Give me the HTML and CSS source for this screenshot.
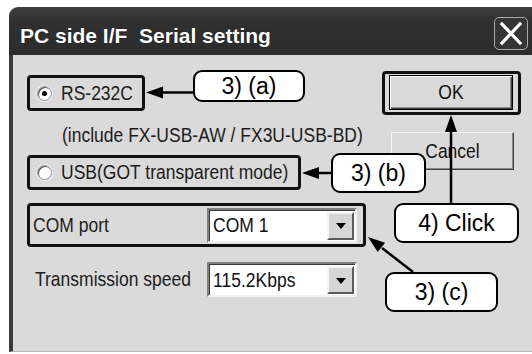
FILE: index.html
```html
<!DOCTYPE html>
<html>
<head>
<meta charset="utf-8">
<link rel="stylesheet" href="styles.css">
</head>
<body>
<div class="window">
  <div class="titlebar">
    <span class="title">PC side I/F&nbsp; Serial setting</span>
    <span class="close">
      <svg width="32" height="31" viewBox="0 0 32 31"><path d="M7 6 L25 25 M25 6 L7 25" stroke="#fff" stroke-width="3.2" stroke-linecap="square" fill="none"/></svg>
    </span>
  </div>
  <div class="client">
    <div class="left">
      <div class="mark rs"><span class="radio on"></span><span class="t">RS-232C</span></div>
      <div class="note"><span class="t">(include FX-USB-AW / FX3U-USB-BD)</span></div>
      <div class="mark usb"><span class="radio"></span><span class="t">USB(GOT transparent mode)</span></div>
      <div class="mark com">
        <span class="lbl"><span class="t">COM port</span></span>
        <div class="combo"><span class="val"><span class="t">COM 1</span></span><span class="drop"><i></i></span></div>
      </div>
      <div class="speed">
        <span class="lbl"><span class="t">Transmission speed</span></span>
        <div class="combo"><span class="val"><span class="t">115.2Kbps</span></span><span class="drop"><i></i></span></div>
      </div>
    </div>
    <div class="right">
      <div class="okframe"><div class="btn ok"><span class="t">OK</span></div></div>
      <div class="btn cancel"><span class="t">Cancel</span></div>
    </div>
  </div>
</div>

<div class="callout ca">3) (a)</div>
<div class="callout cb">3) (b)</div>
<div class="callout c4">4) Click</div>
<div class="callout cc">3) (c)</div>

<svg class="arrows" width="532" height="354" viewBox="0 0 532 354">
  <g stroke="#000" stroke-width="2.5" fill="none">
    <path d="M161 92.5 H194"/>
    <path d="M317 173 H332"/>
    <path d="M451 130 V204"/>
    <path d="M413 272 L382 248"/>
  </g>
  <g fill="#000">
    <polygon points="146,92.5 163,86.5 163,98.5"/>
    <polygon points="302,173 319,167 319,179"/>
    <polygon points="451,115 445,132 457,132"/>
    <polygon points="368,237 385.1,242.7 377.7,252.1"/>
  </g>
</svg>
</body>
</html>
```

FILE: styles.css
```css
html, body {
  margin: 0;
  padding: 0;
}
body {
  width: 532px;
  height: 354px;
  background: #ffffff;
  position: relative;
  overflow: hidden;
  font-family: "Liberation Sans", Arial, sans-serif;
}

.window {
  margin: 7px 0 0 9px;
  width: 523px;
}

.titlebar {
  height: 48px;
  box-sizing: border-box;
  background: linear-gradient(#414141, #303030 30%, #2c2c2c);
  border-top-left-radius: 9px;
  display: flex;
  align-items: flex-start;
  padding-left: 11px;
}
.title {
  margin-top: 17px;
  font-size: 21px;
  line-height: 24px;
  font-weight: bold;
  color: #ffffff;
  text-shadow: 0 0 1px #000;
  white-space: nowrap;
}
.close {
  margin-left: auto;
  margin-right: 4px;
  margin-top: 10px;
  width: 34px;
  height: 33px;
  box-sizing: border-box;
  border: 1.5px solid #a8a8a8;
  border-radius: 5px;
  background: #353535;
  display: flex;
  align-items: center;
  justify-content: center;
}

.client {
  height: 297px;
  box-sizing: border-box;
  background: #dadada;
  border-left: 4px solid #3a3a3a;
  border-bottom: 1px solid #b8b8b8;
  display: flex;
  color: #1c1c1c;
  font-size: 17.5px;
}

.t {
  display: inline-block;
  transform: scaleY(1.17);
  white-space: nowrap;
}

.left {
  width: 369px;
  box-sizing: border-box;
  padding-left: 14px;
  display: flex;
  flex-direction: column;
  align-items: flex-start;
}

.mark {
  border: 3px solid #111;
  border-radius: 4px;
  box-sizing: border-box;
  display: flex;
  align-items: center;
}
.rs {
  margin-top: 20px;
  width: 118px;
  height: 36px;
  padding-left: 7px;
  gap: 9px;
}
.usb {
  margin-top: 10px;
  width: 274px;
  height: 35px;
  padding-left: 7px;
  gap: 9px;
}
.note {
  margin-top: 14px;
  margin-left: 35px;
  line-height: 20px;
  white-space: nowrap;
}

.radio {
  width: 15px;
  height: 15px;
  box-sizing: border-box;
  border-radius: 50%;
  background: #fff;
  border: 1.5px solid #8c8c8c;
  box-shadow: inset 1px 1px 0 #505050, 0 0 0 1px #f2f2f2;
  display: flex;
  align-items: center;
  justify-content: center;
  flex: none;
}
.radio.on::after {
  content: "";
  width: 5px;
  height: 5px;
  border-radius: 50%;
  background: #000;
}

.com {
  margin-top: 13px;
  width: 339px;
  height: 44px;
  padding: 0 6px 0 3px;
}
.com .lbl {
  width: 174px;
  flex: none;
}
.speed {
  margin-top: 15px;
  padding-left: 8px;
  display: flex;
  align-items: center;
}
.speed .lbl {
  width: 172px;
  flex: none;
}

.combo {
  width: 150px;
  height: 35px;
  box-sizing: border-box;
  background: #fff;
  border: 2px solid;
  border-color: #808080 #f2f2f2 #f2f2f2 #808080;
  box-shadow: inset 1px 1px 0 #3a3a3a;
  padding: 2px 1px 1px 2px;
  display: flex;
  align-items: stretch;
  flex: none;
}
.combo .val {
  flex: 1;
  display: flex;
  align-items: center;
  padding-left: 2px;
  color: #111;
}
.drop {
  width: 27px;
  box-sizing: border-box;
  background: #d6d6d6;
  border: 2px solid;
  border-color: #f4f4f4 #5a5a5a #5a5a5a #f4f4f4;
  display: flex;
  align-items: center;
  justify-content: center;
}
.drop i {
  width: 0;
  height: 0;
  border-left: 5px solid transparent;
  border-right: 5px solid transparent;
  border-top: 6px solid #000;
  margin-top: 1px;
}

.right {
  display: flex;
  flex-direction: column;
  align-items: flex-start;
}
.okframe {
  margin-top: 16px;
  border: 3px solid #111;
  border-radius: 4px;
  padding: 1px 5px 2px 4px;
}
.btn {
  box-sizing: border-box;
  background: #dadada;
  display: flex;
  align-items: center;
  justify-content: center;
  color: #111;
}
.ok {
  width: 124px;
  height: 35px;
  border: 1px solid #000;
  box-shadow: inset 1px 1px 0 #ffffff, inset -1px -1px 0 #404040, inset -2px -2px 0 #8a8a8a;
}
.cancel {
  margin-top: 17px;
  margin-left: 9px;
  width: 123px;
  height: 38px;
  border: 1px solid;
  border-color: #f6f6f6 #404040 #404040 #f6f6f6;
  box-shadow: inset -1px -1px 0 #8a8a8a;
}

.callout {
  position: absolute;
  box-sizing: border-box;
  background: #fff;
  border: 2px solid #000;
  border-radius: 9px;
  font-size: 23px;
  color: #000;
  display: flex;
  align-items: center;
  justify-content: center;
  white-space: nowrap;
}
.ca { left: 193px; top: 70px; width: 112px; height: 32px; }
.cb { left: 331px; top: 153px; width: 95px; height: 40px; }
.c4 { left: 394px; top: 203px; width: 125px; height: 40px; }
.cc { left: 385px; top: 272px; width: 113px; height: 40px; }

.arrows {
  position: absolute;
  left: 0;
  top: 0;
  pointer-events: none;
}
```
